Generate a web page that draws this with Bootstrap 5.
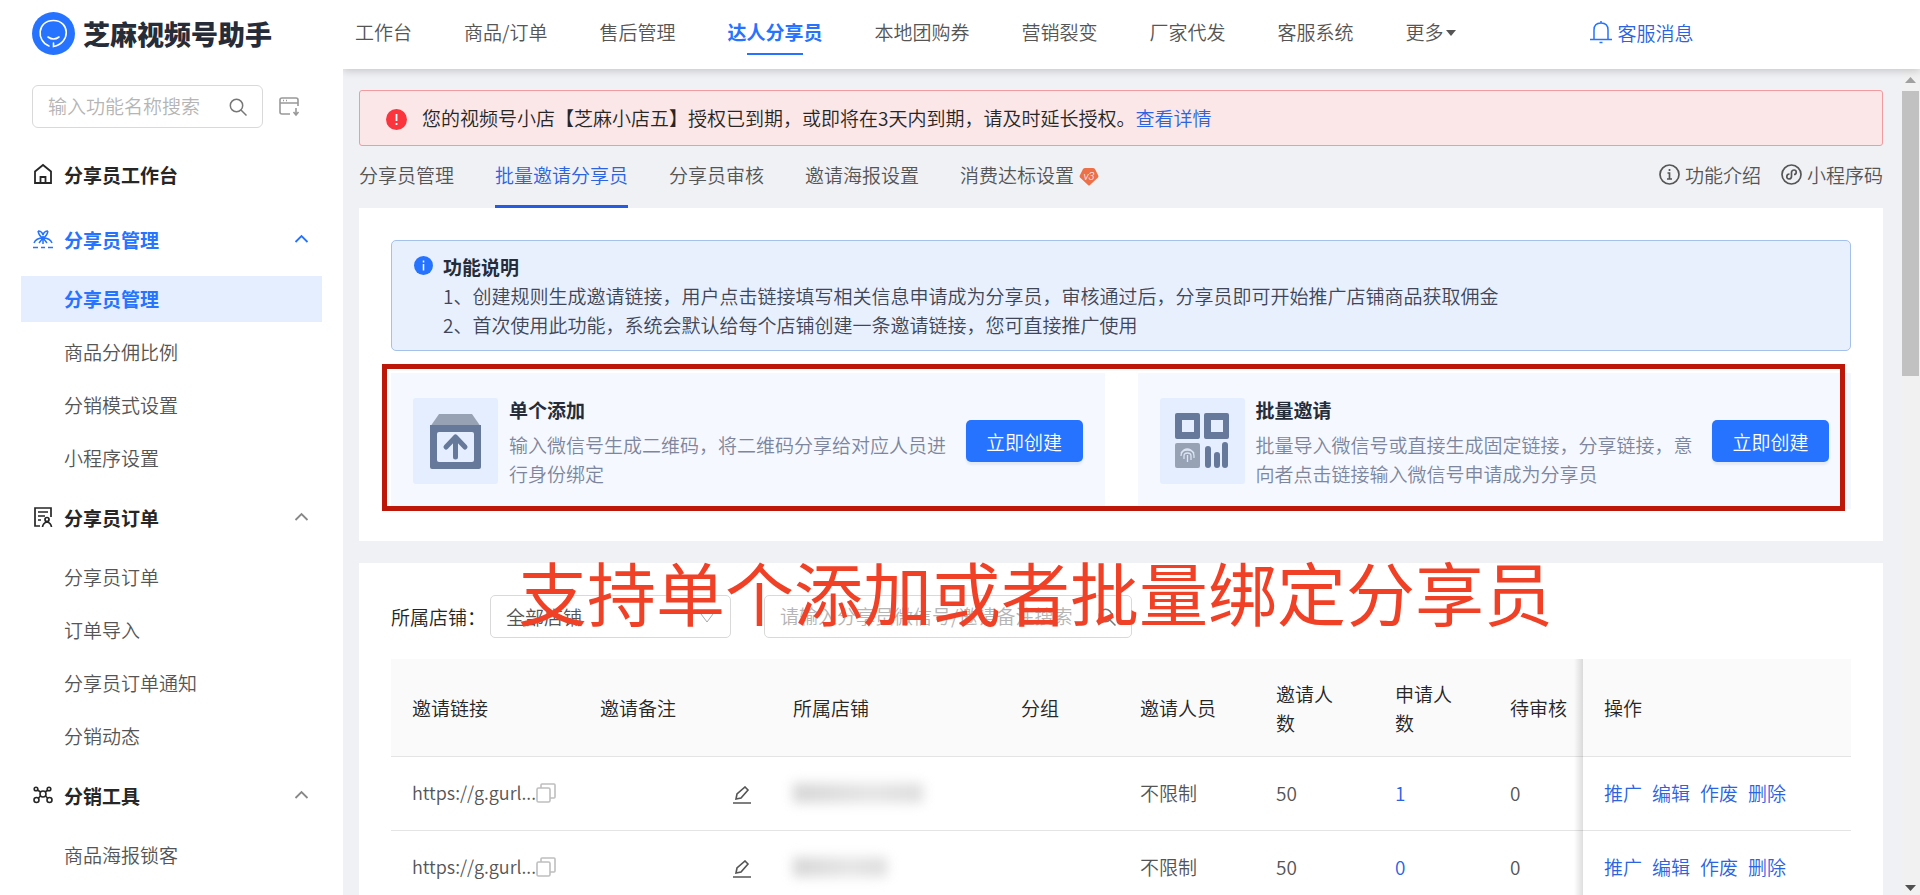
<!DOCTYPE html>
<html lang="zh-CN">
<head>
<meta charset="utf-8">
<meta name="viewport" content="width=device-width, initial-scale=1">
<title>芝麻视频号助手</title>
<link href="https://cdn.jsdelivr.net/npm/bootstrap@5.3.0/dist/css/bootstrap.min.css" rel="stylesheet">
<script defer src="https://cdn.jsdelivr.net/npm/bootstrap@5.3.0/dist/js/bootstrap.bundle.min.js"></script>
<style>
:root{--ink:#262626;--muted:#555;--blue:#2673ff;--link:#2b63e3;--pane:#f0f1f5}
html,body{height:100%}
body{font:350 19px/29px "Noto Sans CJK SC",sans-serif;color:var(--ink);overflow:hidden;background:#fff}
a{text-decoration:none;color:var(--link)}
svg{display:block;flex:none}
.side{width:343px;flex:none;padding:12px 21px 0;background:#fff;overflow:hidden;position:relative;z-index:3}
.brand{gap:8px;padding-left:11px;height:43px;color:#262c38;font-size:27px;font-weight:900}
.find{margin:30px 0 17px 11px;gap:16px}
.find-box{width:231px;height:43px;border:1px solid #d9d9d9;border-radius:6px;padding:0 15px}
.find-box input,.query-box input{border:0;outline:0;background:none;min-width:0;flex:1;padding:0 0 2px;font-weight:350}
input::placeholder{color:#b5b5b5;opacity:1}
.group-head{height:58px;padding:0 13px 0 12px;gap:11px;color:#262626;font-weight:700;width:100%;border:0;background:none;text-align:left}
.group-head:first-child{margin-bottom:7px}
.group-head.on{color:var(--blue)}
.sub-item{display:flex;align-items:center;height:46px;margin-bottom:7px;padding:0 0 1px 43px;color:var(--muted)}
.sub-list{padding-top:8px}
.sub-item.on{background:#e5eeff;color:var(--blue);font-weight:700}
.work{min-width:0}
.topbar{height:69px;flex:none;gap:52px;padding-left:12px;box-shadow:0 2px 8px rgba(0,0,0,.18);position:relative;z-index:2;background:#fff}
.topbar a{color:var(--muted);height:62px;display:flex;align-items:center;position:relative;white-space:nowrap}
.topbar a.on{color:var(--blue);font-weight:700}
.topbar a.on::after{content:"";position:absolute;left:20px;right:20px;bottom:7px;height:2px;background:var(--blue)}
.topbar a.msg{color:var(--link);margin-left:82px;gap:6px;height:64px}
.caret{border:5px solid transparent;border-top:6px solid var(--muted);border-bottom:0;margin:4px 0 0 2px}
.scroll-row{min-height:0}
.pane{background:var(--pane);padding:21px 18px 0 16px;overflow:hidden;min-width:0}
.warn{height:56px;border:1px solid #f19a9f;border-radius:3px;background:#fbe7e8;padding:0 26px 2px;gap:15px}
.tabs{height:62px;gap:41px}
.tabs a{color:var(--muted);height:62px;padding-bottom:2px;display:flex;align-items:center;gap:5px;border-bottom:3px solid transparent}
.tabs a.on{color:var(--link);border-color:#235be3}
.tabs .tools{gap:20px}
.sheet{background:#fff;padding:32px}
.sheet+.sheet{margin-top:22px}
.note{border:1px solid #a6c1e9;border-radius:5px;background:#e8f0fe;padding:11px 22px;gap:10px;color:#404656}
.note strong,.offer strong{color:#262c38;display:block;font-weight:700}
.offers{position:relative;gap:33px;margin-top:22px}
.offers::after{content:"";position:absolute;left:-9px;right:6px;top:-9px;bottom:-2px;border:5px solid #bd1709;pointer-events:none}
.offer{background:#f5f8ff;height:136px;padding:0 22px;gap:11px;flex:1 1 0;min-width:0}
.offer p{color:#7d869c;margin:6px 0 0}
.offer-pic{width:85px;height:86px;background:#e5eeff;border-radius:3px;display:flex;align-items:center;justify-content:center;flex:none}
.offer .btn{width:117px;height:42px;background:var(--blue);border:0;border-radius:5px;padding:0;font:inherit;color:#fff;box-shadow:0 3px 2px #e4eaf4;margin-left:auto;flex:none}
.query{position:relative}
.query-box{height:43px;border:1px solid #d9d9d9;border-radius:5px;background:#fff;position:relative}
.shop{width:241px;margin:0 33px 0 4px}
.shop select{appearance:none;width:100%;height:100%;border:0;background:none;padding:0 15px;font-weight:350;color:var(--muted)}
.shop svg{position:absolute;right:16px;top:17px;pointer-events:none}
.seek{width:368px;padding:0 15px}
.caption-line{position:absolute;left:127px;top:-47px;font-size:69px;line-height:86px;color:#f04127;white-space:nowrap;font-weight:400;pointer-events:none}
.grid{margin-top:21px;width:100%;table-layout:fixed;border-collapse:separate;border-spacing:0}
.grid th{height:98px;background:#fafafa;font-weight:350;padding:0 0 0 21px;border-bottom:1px solid #e4e4e4}
.grid td{height:74px;padding:0 0 2px 21px;border-bottom:1px solid #e4e4e4;color:var(--muted)}
.grid td.remark{padding:2px 21px 0 0}
.grid .ops{background:#fff;position:relative;white-space:nowrap}
.grid .ops::before{content:"";position:absolute;left:-9px;width:9px;top:0;bottom:-1px;background:linear-gradient(to left,rgba(0,0,0,.13),transparent)}
.grid th.ops{background:#fafafa}
.ops a+a{margin-left:10px}
.share-url{font-size:18px}
.masked{height:20px;width:130px;background:linear-gradient(90deg,#d6d6d6,#e6e6e6 60%,#dedede);filter:blur(6px)}
.masked.short{width:94px}
.rail{width:19px;flex:none;background:#f1f1f1}
.rail-thumb{width:17px;height:285px;background:#c1c1c1}
</style>
</head>
<body class="d-flex">
<aside class="side">
 <div class="brand d-flex align-items-center">
  <svg width="43" height="43" viewBox="0 0 43 43" fill="none" stroke="#fff" stroke-width="1.6" stroke-linecap="round"><circle cx="21.5" cy="21.5" r="21.5" fill="#2673ff" stroke="none"/><path d="M17 34C4 29 5 8.500 21.500 8.500S39 31 21.500 34.500V31"/><path d="M16 25q5.500 4 11 0"/></svg>
  <span>芝麻视频号助手</span>
 </div>
 <div class="find d-flex align-items-center">
  <label class="find-box d-flex align-items-center"><input type="text" placeholder="输入功能名称搜索" aria-label="输入功能名称搜索"><svg width="18" height="18" viewBox="0 0 18 18" fill="none" stroke="#777" stroke-width="1.5"><circle cx="7.5" cy="7.5" r="6.2"/><path d="M12 12l5.500 5.500"/></svg></label>
  <svg width="22" height="20" viewBox="0 0 22 20" fill="none" stroke="#999" stroke-width="1.6"><path d="M11 17H3q-2 0-2-2V3q0-2 2-2h14q2 0 2 2v6M1 6h18M4 3.500h1M7 3.500h1M17 11v7M14.500 15l2.500 3 2.500-3"/></svg>
 </div>
 <nav>
  <a href="#" class="group-head d-flex align-items-center"><svg width="20" height="22" viewBox="0 0 20 22" fill="none" stroke="#262626" stroke-width="1.8"><path d="M2 8.500L10 2l8 6.500V20H2zM7.500 20v-6h5v6"/></svg>分享员工作台</a>
  <button type="button" class="group-head on d-flex align-items-center"><svg width="20" height="20" viewBox="0 0 20 20" fill="none" stroke="#2673ff" stroke-width="1.5"><path d="M1 14q2-5 9-5t9 5M10 7v8M5 2q1 5 5 7 4-2 5-7M5 2q4 0 5 4 1-4 5-4M6 14l4-5 4 5M0 18.500h5M8 18.500h4M15 18.500h5"/></svg><span>分享员管理</span><svg class="ms-auto" width="15" height="10" viewBox="0 0 15 10" fill="none" stroke="#2673ff" stroke-width="1.8"><path d="M1.500 8l6-6 6 6"/></svg></button>
  <div class="sub-list"><a href="#" class="sub-item on">分享员管理</a><a href="#" class="sub-item">商品分佣比例</a><a href="#" class="sub-item">分销模式设置</a><a href="#" class="sub-item">小程序设置</a></div>
  <button type="button" class="group-head d-flex align-items-center"><svg width="20" height="22" viewBox="0 0 20 22" fill="none" stroke="#262626" stroke-width="1.7"><path d="M7 20H2V2h16v9M5 6h10M5 10h7M5 14h3"/><circle cx="14" cy="13.500" r="2"/><path d="M9.500 21q.5-4 4.500-5 4 1 4.500 5"/></svg><span>分享员订单</span><svg class="ms-auto" width="15" height="10" viewBox="0 0 15 10" fill="none" stroke="#888" stroke-width="1.8"><path d="M1.500 8l6-6 6 6"/></svg></button>
  <div class="sub-list"><a href="#" class="sub-item">分享员订单</a><a href="#" class="sub-item">订单导入</a><a href="#" class="sub-item">分享员订单通知</a><a href="#" class="sub-item">分销动态</a></div>
  <button type="button" class="group-head d-flex align-items-center"><svg width="20" height="18" viewBox="0 0 20 18" fill="none" stroke="#262626" stroke-width="1.6"><circle cx="10" cy="8" r="3"/><circle cx="3" cy="3" r="1.8"/><circle cx="16" cy="3" r="1.8"/><circle cx="3.500" cy="14" r="2.500"/><circle cx="16.500" cy="14" r="2.500"/><path d="M4.500 4l3 2M15 4l-3 2M5.500 12l2-2M14.500 12l-2-2"/></svg><span>分销工具</span><svg class="ms-auto" width="15" height="10" viewBox="0 0 15 10" fill="none" stroke="#888" stroke-width="1.8"><path d="M1.500 8l6-6 6 6"/></svg></button>
  <div class="sub-list"><a href="#" class="sub-item">商品海报锁客</a></div>
 </nav>
</aside>
<div class="work d-flex flex-column flex-grow-1">
 <nav class="topbar d-flex">
  <a href="#">工作台</a><a href="#">商品/订单</a><a href="#">售后管理</a><a href="#" class="on">达人分享员</a><a href="#">本地团购券</a><a href="#">营销裂变</a><a href="#">厂家代发</a><a href="#">客服系统</a><a href="#">更多<span class="caret"></span></a>
  <a href="#" class="msg"><svg width="22" height="24" viewBox="0 0 22 24" fill="none" stroke="#2673ff" stroke-width="1.5"><path d="M4 19.500V10q0-7 7-7t7 7v9.500M0 19.500h22M9.500 22.500h3M11 1v2"/></svg>客服消息</a>
 </nav>
 <div class="scroll-row d-flex flex-grow-1">
 <main class="pane flex-grow-1">
  <div class="warn d-flex align-items-center"><svg class="mt-1" width="21" height="21" viewBox="0 0 21 21"><circle cx="10.500" cy="10.500" r="10.500" fill="#fa353d"/><path d="M10.500 5v7M10.500 14v2" stroke="#fff" stroke-width="1.8"/></svg><span>您的视频号小店【芝麻小店五】授权已到期，或即将在3天内到期，请及时延长授权。<a href="#">查看详情</a></span></div>
  <div class="tabs d-flex">
   <a href="#">分享员管理</a><a href="#" class="on">批量邀请分享员</a><a href="#">分享员审核</a><a href="#">邀请海报设置</a><a href="#">消费达标设置<svg class="mt-1" width="20" height="18" viewBox="0 0 20 18"><path d="M6 0h8q1 0 2 1l3 6q1 1 0 2.500L11 17q-1 1-2 0L1 9.500Q0 8 1 7l3-6q1-1 2-1z" fill="#ec7048"/><text x="10" y="12" font-size="11" font-style="italic" text-anchor="middle" fill="#fff" font-family="Roboto,sans-serif">v3</text></svg></a>
   <div class="tools d-flex ms-auto"><a href="#"><svg width="21" height="21" viewBox="0 0 21 21" fill="none" stroke="#555" stroke-width="1.7"><circle cx="10.500" cy="10.500" r="9.500"/><path d="M10.500 5v2M8.500 9h2v6M8 15h5"/></svg>功能介绍</a><a href="#"><svg width="21" height="21" viewBox="0 0 21 21" fill="none" stroke="#555" stroke-width="1.7"><circle cx="10.500" cy="10.500" r="9.500"/><path d="M8.500 10C5 10 5 15 8 15s2.500-3 2.500-4.500S10 6 13 6s3 4.500 0 4.500"/></svg>小程序码</a></div>
  </div>
  <section class="sheet">
   <div class="note d-flex"><svg class="mt-1" width="19" height="19" viewBox="0 0 19 19"><circle cx="9.500" cy="9.500" r="9.500" fill="#2673ff"/><path d="M9.500 4.500v2M9.500 8v6.500" stroke="#fff" stroke-width="1.5"/></svg><div><strong>功能说明</strong>1、创建规则生成邀请链接，用户点击链接填写相关信息申请成为分享员，审核通过后，分享员即可开始推广店铺商品获取佣金<br>2、首次使用此功能，系统会默认给每个店铺创建一条邀请链接，您可直接推广使用</div></div>
   <div class="offers d-flex">
    <div class="offer d-flex align-items-center"><div class="offer-pic"><svg width="51" height="55" viewBox="0 0 51 55"><path d="M9 0h33l9 13H0z" fill="#98a2b5"/><path d="M0 11h51v42q0 2-2 2H2q-2 0-2-2z" fill="#66799b"/><rect x="7" y="18" width="37" height="30" rx="2" fill="#e5eeff"/><path d="M25.500 43V24M16 33l9.500-10L35 33" fill="none" stroke="#66799b" stroke-width="5" stroke-linecap="round" stroke-linejoin="round"/></svg></div><div><strong>单个添加</strong><p>输入微信号生成二维码，将二维码分享给对应人员进行身份绑定</p></div><button class="btn" type="button">立即创建</button></div>
    <div class="offer d-flex align-items-center"><div class="offer-pic"><svg width="54" height="56" viewBox="0 0 54 56" fill="#66799b"><path fill-rule="evenodd" d="M2 0h21q2 0 2 2v22q0 2-2 2H2q-2 0-2-2V2q0-2 2-2zm5 7v12h12V7zM31 0h21q2 0 2 2v22q0 2-2 2H31q-2 0-2-2V2q0-2 2-2zm5 7v12h12V7z"/><rect y="30" width="25" height="25" rx="2" fill="#98a2b5"/><path d="M6 40q6-8 13 0M6 43q0-6 6.500-6t6.500 6v2M9 46v-3q0-3 3.500-3t3.500 3v4M12.500 42v7" fill="none" stroke="#dbe4f3" stroke-width="1.3"/><rect x="30" y="33" width="6" height="22" rx="3"/><rect x="39" y="39" width="6" height="16" rx="3"/><rect x="47" y="29" width="6" height="26" rx="3"/></svg></div><div><strong>批量邀请</strong><p>批量导入微信号或直接生成固定链接，分享链接，意向者点击链接输入微信号申请成为分享员</p></div><button class="btn" type="button">立即创建</button></div>
   </div>
  </section>
  <section class="sheet">
   <div class="query d-flex align-items-center"><label for="shop">所属店铺：</label><div class="query-box shop"><select id="shop"><option>全部店铺</option></select><svg width="14" height="10" viewBox="0 0 14 10" fill="none" stroke="#aaa"><path d="M1 1l6 8 6-8"/></svg></div>
   <label class="query-box seek d-flex align-items-center"><input type="text" placeholder="请输入分享员微信号/邀请备注搜索" aria-label="请输入分享员微信号/邀请备注搜索"><svg width="18" height="18" viewBox="0 0 18 18" fill="none" stroke="#777" stroke-width="1.5"><circle cx="7.500" cy="7.500" r="6.200"/><path d="M12 12l5.500 5.500"/></svg></label>
   <div class="caption-line">支持单个添加或者批量绑定分享员</div></div>
   <table class="grid">
   <colgroup><col style="width:188px"><col style="width:193px"><col style="width:228px"><col style="width:119px"><col style="width:136px"><col style="width:119px"><col style="width:115px"><col style="width:94px"><col style="width:268px"></colgroup>
   <thead><tr><th>邀请链接</th><th>邀请备注</th><th>所属店铺</th><th>分组</th><th>邀请人员</th><th>邀请人<br>数</th><th>申请人<br>数</th><th>待审核</th><th class="ops">操作</th></tr></thead>
   <tbody>
   <tr><td><div class="share-url d-flex align-items-center">https://g.gurl...<svg width="20" height="20" viewBox="0 0 20 20" fill="none" stroke="#bfbfbf" stroke-width="1.6"><rect x="1" y="5" width="13" height="14" rx="1.500"/><path d="M5 5V2q0-1 1-1h12q1 0 1 1v12q0 1-1 1h-4"/></svg></div></td><td class="remark"><svg class="ms-auto" width="18" height="18" viewBox="0 0 18 18" fill="none" stroke="#555" stroke-width="1.600"><path d="M3 13l1-5 8-7 3 3-7 8zM0 17h18"/></svg></td><td><div class="masked"></div></td><td></td><td>不限制</td><td>50</td><td><a href="#">1</a></td><td>0</td><td class="ops"><a href="#">推广</a><a href="#">编辑</a><a href="#">作废</a><a href="#">删除</a></td></tr>
   <tr><td><div class="share-url d-flex align-items-center">https://g.gurl...<svg width="20" height="20" viewBox="0 0 20 20" fill="none" stroke="#bfbfbf" stroke-width="1.6"><rect x="1" y="5" width="13" height="14" rx="1.500"/><path d="M5 5V2q0-1 1-1h12q1 0 1 1v12q0 1-1 1h-4"/></svg></div></td><td class="remark"><svg class="ms-auto" width="18" height="18" viewBox="0 0 18 18" fill="none" stroke="#555" stroke-width="1.600"><path d="M3 13l1-5 8-7 3 3-7 8zM0 17h18"/></svg></td><td><div class="masked short"></div></td><td></td><td>不限制</td><td>50</td><td><a href="#">0</a></td><td>0</td><td class="ops"><a href="#">推广</a><a href="#">编辑</a><a href="#">作废</a><a href="#">删除</a></td></tr>
   </tbody></table>
  </section>
 </main>
 <div class="rail d-flex flex-column align-items-center"><svg width="19" height="22" viewBox="0 0 19 22"><path d="M4 14l5.500-6 5.500 6z" fill="#a0a0a0"/></svg><div class="rail-thumb"></div><svg class="mt-auto" width="19" height="18" viewBox="0 0 19 18"><path d="M4 8h11l-5.500 6z" fill="#505050"/></svg></div>
 </div>
</div>
</body>
</html>
